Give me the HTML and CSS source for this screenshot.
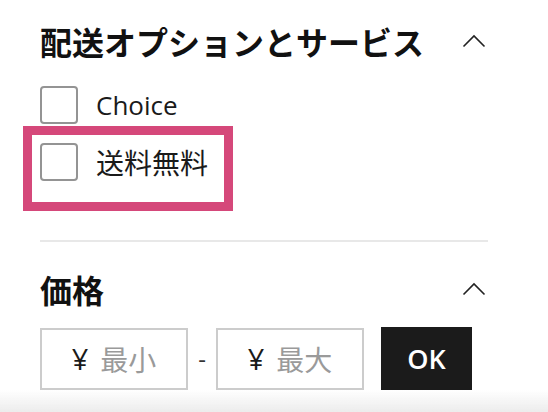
FILE: index.html
```html
<!DOCTYPE html>
<html>
<head>
    <title>絞り込み</title>
    <link rel="stylesheet" href="styles.css">
</head>
<body>
    <div class="filters">
        <div class="section">
            <div class="section-head">
                <h2>配送オプションとサービス</h2>
                <svg class="chevron" width="24" height="14" viewBox="0 0 24 14">
                    <path d="M1.5 12.5 L12 2 L22.5 12.5" fill="none" stroke="#222" stroke-width="1.6"/>
                </svg>
            </div>
            <div class="options">
                <label class="option">
                    <span class="box"></span>
                    <span class="option-text latin">Choice</span>
                </label>
                <label class="option highlight">
                    <span class="box"></span>
                    <span class="option-text">送料無料</span>
                </label>
            </div>
        </div>

        <div class="divider"></div>

        <div class="section">
            <div class="section-head price-head">
                <h2>価格</h2>
                <svg class="chevron" width="24" height="14" viewBox="0 0 24 14">
                    <path d="M1.5 12.5 L12 2 L22.5 12.5" fill="none" stroke="#222" stroke-width="1.6"/>
                </svg>
            </div>
            <div class="price-row">
                <div class="price-input"><span class="yen">¥</span><span class="ph">最小</span></div>
                <span class="dash">-</span>
                <div class="price-input"><span class="yen">¥</span><span class="ph">最大</span></div>
                <button class="btn-ok">OK</button>
            </div>
        </div>
    </div>
    <div class="fade"></div>
</body>
</html>
```

FILE: styles.css
```css
body { margin: 0; background: #fff; font-family: "Open Sans", "Noto Sans CJK JP", sans-serif; color: #1a1a1a; }
.filters { width: 448px; padding: 19px 0 0 40px; }
.section-head { display: flex; align-items: center; justify-content: space-between; height: 44px; }
.section-head h2 { margin: 0; font-size: 32px; font-weight: 700; line-height: 44px; font-family: "Noto Sans CJK JP", sans-serif; color: #111; }
.chevron { display: block; margin-right: 2px; }
.options { display: flex; flex-direction: column; gap: 19px; margin-top: 23px; }
.option { display: flex; align-items: center; gap: 18px; height: 38px; position: relative; }
.box { width: 34px; height: 34px; border: 2px solid #949494; border-radius: 4px; }
.option-text { font-size: 28px; font-family: "Noto Sans CJK JP", sans-serif; line-height: 38px; color: #1a1a1a; }
.option-text.latin { font-family: "Open Sans", sans-serif; font-size: 26px; }
.highlight::after { content: ""; position: absolute; left: -17px; top: -17px; width: 192px; height: 67px; border: 9px solid #d5487a; }
.divider { height: 2px; background: #e8e8e8; margin-top: 59px; }
.price-head { margin-top: 25px; }
.price-row { display: flex; align-items: center; margin-top: 16px; }
.price-input { width: 144px; height: 58px; border: 2px solid #cccccc; display: flex; align-items: center; justify-content: center; gap: 12px; font-size: 28px; font-family: "Noto Sans CJK JP", sans-serif; }
.yen { color: #1a1a1a; font-family: "Open Sans", sans-serif; font-size: 29px; }
.ph { color: #9a9a9a; }
.dash { width: 28px; text-align: center; font-size: 24px; color: #333; }
.btn-ok { margin-left: 17px; width: 91px; height: 63px; border: none; background: #1b1b1b; color: #fff; font-family: "Open Sans", sans-serif; font-size: 27px; font-weight: 600; padding: 0; }
.fade { position: fixed; left: 0; right: 0; bottom: 0; height: 22px; background: linear-gradient(to bottom, rgba(236,236,236,0), #ececec); }
```
